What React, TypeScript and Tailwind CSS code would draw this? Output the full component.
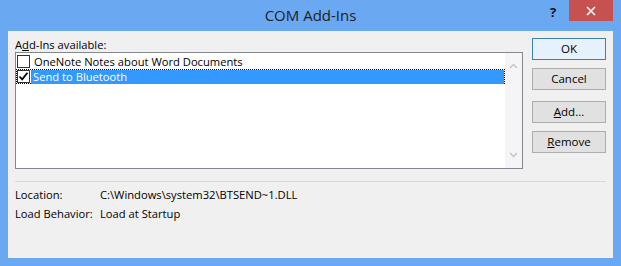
import React from "react";

const font = { fontFamily: '"Segoe UI", "Open Sans", "Noto Sans", sans-serif' };

function Check({ checked }: { checked?: boolean }) {
  return (
    <div className="w-[13px] h-[13px] border border-[#333333] bg-white flex items-center justify-center shrink-0">
      {checked && (
        <svg width="11" height="11" viewBox="0 0 11 11">
          <path d="M1.5 5.5 L4.2 8.3 L9.5 1.8" fill="none" stroke="#000" strokeWidth="1.8" />
        </svg>
      )}
    </div>
  );
}

function Btn({ children, primary, mt }: { children: React.ReactNode; primary?: boolean; mt: string }) {
  return (
    <div
      className={`${mt} h-[22px] w-[74px] flex items-center justify-center text-[11.5px] text-black bg-[#e1e1e1] border ${
        primary ? "border-[#3c7fb1] bg-[#e5f1fb]" : "border-[#adadad]"
      }`}
    >
      {children}
    </div>
  );
}

export default function App() {
  return (
    <div className="w-[621px] h-[266px] bg-[#6aa8f1] flex flex-col" style={font}>
      <div className="h-[31px] flex items-start relative shrink-0">
        <div className="absolute left-0 right-0 top-[4px] text-center text-[15px] text-[#1e1e1e]">COM Add-Ins</div>
        <div className="absolute left-[550px] top-[3px] text-[13px] font-bold text-[#111]">?</div>
        <div className="absolute left-[569px] top-0 w-[44px] h-[21px] bg-[#c75050] flex items-center justify-center">
          <svg width="10" height="10" viewBox="0 0 10 10">
            <path d="M1 1 L9 9 M9 1 L1 9" stroke="#fff" strokeWidth="1.6" />
          </svg>
        </div>
      </div>
      <div className="mx-[8px] mb-[8px] flex-1 bg-[#f0f0f0] flex flex-col text-[11.2px] text-black">
        <div className="flex px-[7px] pt-[6px]">
          <div className="w-[508px] flex flex-col">
            <div className="h-[15px] leading-[15px]">
              A<span className="underline">d</span>d-Ins available:
            </div>
            <div className="h-[117px] border border-[#828790] bg-white flex">
              <div className="flex-1 pt-[1px] flex flex-col">
                <div className="h-[15px] flex items-center">
                  <div className="ml-[1px]">
                    <Check />
                  </div>
                  <div className="pl-[3px] leading-[15px] ml-[1px]">OneNote Notes about Word Documents</div>
                </div>
                <div className="h-[15px] flex items-center border border-dotted border-[#000]">
                  <div>
                    <Check checked />
                  </div>
                  <div className="flex-1 ml-[1px] h-[14px] bg-[#3399ff] text-white pl-[2px] leading-[14px]">
                    Send to Bluetooth
                  </div>
                </div>
              </div>
              <div className="w-[17px] bg-[#f5f5f5] flex flex-col items-center justify-between py-[10px]">
                <svg width="9" height="6" viewBox="0 0 9 6">
                  <path d="M1 5 L4.5 1.5 L8 5" fill="none" stroke="#c2c2c2" strokeWidth="1.3" />
                </svg>
                <svg width="9" height="6" viewBox="0 0 9 6">
                  <path d="M1 1 L4.5 4.5 L8 1" fill="none" stroke="#c2c2c2" strokeWidth="1.3" />
                </svg>
              </div>
            </div>
          </div>
          <div className="ml-[9px] flex flex-col pt-[1px]">
            <Btn primary mt="mt-0">OK</Btn>
            <Btn mt="mt-[8px]">Cancel</Btn>
            <Btn mt="mt-[11px]">
              <span>
                <span className="underline">A</span>dd...
              </span>
            </Btn>
            <Btn mt="mt-[8px]">
              <span>
                <span className="underline">R</span>emove
              </span>
            </Btn>
          </div>
        </div>
        <div className="mx-[7px] mt-[12px] h-px bg-[#d9d9d9]" />
        <div className="px-[7px] pt-[4px] flex flex-col">
          <div className="flex h-[19px] items-center">
            <div className="w-[85px]">Location:</div>
            <div>C:\Windows\system32\BTSEND~1.DLL</div>
          </div>
          <div className="flex h-[19px] items-center">
            <div className="w-[85px]">Load Behavior:</div>
            <div>Load at Startup</div>
          </div>
        </div>
      </div>
    </div>
  );
}
